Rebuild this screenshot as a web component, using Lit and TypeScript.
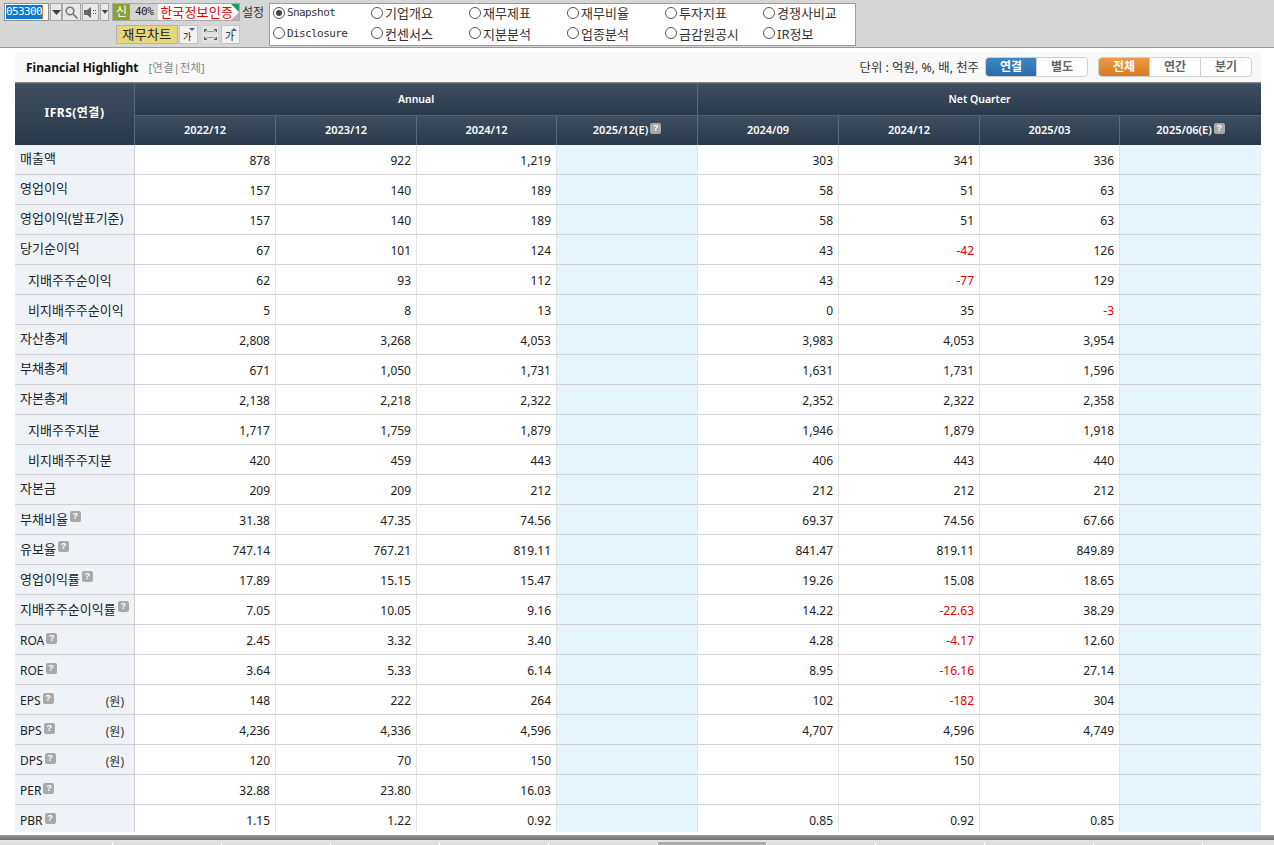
import { LitElement, css, html, nothing } from 'lit'
import { customElement } from 'lit/decorators.js'

type Row = {
  label: string
  indent?: boolean
  help?: boolean
  unit?: string
  values: string[]
}

const RADIOS = [
  'Snapshot', '기업개요', '재무제표', '재무비율', '투자지표', '경쟁사비교',
  'Disclosure', '컨센서스', '지분분석', '업종분석', '금감원공시', 'IR정보',
]

const ANNUAL = ['2022/12', '2023/12', '2024/12', '2025/12(E)']
const QUARTER = ['2024/09', '2024/12', '2025/03', '2025/06(E)']

const ROWS: Row[] = [
  { label: '매출액', values: ['878', '922', '1,219', '', '303', '341', '336', ''] },
  { label: '영업이익', values: ['157', '140', '189', '', '58', '51', '63', ''] },
  { label: '영업이익(발표기준)', values: ['157', '140', '189', '', '58', '51', '63', ''] },
  { label: '당기순이익', values: ['67', '101', '124', '', '43', '-42', '126', ''] },
  { label: '지배주주순이익', indent: true, values: ['62', '93', '112', '', '43', '-77', '129', ''] },
  { label: '비지배주주순이익', indent: true, values: ['5', '8', '13', '', '0', '35', '-3', ''] },
  { label: '자산총계', values: ['2,808', '3,268', '4,053', '', '3,983', '4,053', '3,954', ''] },
  { label: '부채총계', values: ['671', '1,050', '1,731', '', '1,631', '1,731', '1,596', ''] },
  { label: '자본총계', values: ['2,138', '2,218', '2,322', '', '2,352', '2,322', '2,358', ''] },
  { label: '지배주주지분', indent: true, values: ['1,717', '1,759', '1,879', '', '1,946', '1,879', '1,918', ''] },
  { label: '비지배주주지분', indent: true, values: ['420', '459', '443', '', '406', '443', '440', ''] },
  { label: '자본금', values: ['209', '209', '212', '', '212', '212', '212', ''] },
  { label: '부채비율', help: true, values: ['31.38', '47.35', '74.56', '', '69.37', '74.56', '67.66', ''] },
  { label: '유보율', help: true, values: ['747.14', '767.21', '819.11', '', '841.47', '819.11', '849.89', ''] },
  { label: '영업이익률', help: true, values: ['17.89', '15.15', '15.47', '', '19.26', '15.08', '18.65', ''] },
  { label: '지배주주순이익률', help: true, values: ['7.05', '10.05', '9.16', '', '14.22', '-22.63', '38.29', ''] },
  { label: 'ROA', help: true, values: ['2.45', '3.32', '3.40', '', '4.28', '-4.17', '12.60', ''] },
  { label: 'ROE', help: true, values: ['3.64', '5.33', '6.14', '', '8.95', '-16.16', '27.14', ''] },
  { label: 'EPS', help: true, unit: '(원)', values: ['148', '222', '264', '', '102', '-182', '304', ''] },
  { label: 'BPS', help: true, unit: '(원)', values: ['4,236', '4,336', '4,596', '', '4,707', '4,596', '4,749', ''] },
  { label: 'DPS', help: true, unit: '(원)', values: ['120', '70', '150', '', '', '150', '', ''] },
  { label: 'PER', help: true, values: ['32.88', '23.80', '16.03', '', '', '', '', ''] },
  { label: 'PBR', help: true, values: ['1.15', '1.22', '0.92', '', '0.85', '0.92', '0.85', ''] },
]

const COLS = [120, 141, 141, 140, 141, 141, 141, 140, 141]
const TABS = 11

@customElement('app-root')
export class AppRoot extends LitElement {
  static styles = css`
    :host {
      display: block;
      height: 845px;
      overflow: hidden;
      background: #fff;
      font-family: "Noto Sans", "Noto Sans CJK KR", sans-serif;
      font-size: 12px;
      color: #222;
    }
    .page { display: flex; flex-direction: column; height: 845px; }

    .toolbar {
      flex: none;
      display: flex;
      gap: 5px;
      padding: 3px 0 0 4px;
      box-sizing: border-box;
      background: #d6d6d6;
      border-bottom: 1px solid #9a9a9a;
      height: 48px;
    }
    .controls { width: 260px; display: flex; flex-direction: column; gap: 4px; }
    .control-row { display: flex; align-items: center; height: 18px; }
    .control-row.second { height: 19px; padding-left: 112px; }
    .code {
      width: 45px; height: 18px; box-sizing: border-box; overflow: hidden;
      background: #fff; border: 1px solid #8f8f8f;
      padding: 1px 0 0 1px;
      font: 11px/14px "DejaVu Sans Mono", monospace; color: #fff;
    }
    .code span {
      display: inline-block; background: #0a78d7; width: 36px; height: 14px;
      border-right: 1px solid #e07b1c; letter-spacing: -0.6px;
    }
    .tool {
      height: 18px; box-sizing: border-box;
      display: flex; align-items: center; justify-content: center;
      background: #e9e9e9; border: 1px solid #a8a8a8;
    }
    .tool.drop { width: 13px; margin-left: 1px; }
    .tool.search { width: 19px; }
    .tool.sound { width: 17px; margin-left: 1px; }
    .tool.drop2 { width: 9px; margin-left: 1px; }
    .cert {
      width: 129px; height: 18px; margin-left: 3px; box-sizing: border-box;
      display: flex; position: relative;
      background: #fff; border: 1px solid #a8a8a8;
    }
    .cert .sin { width: 17px; background: #8ea12f; color: #fff; text-align: center; line-height: 16px; }
    .cert .pct {
      width: 28px; background: #d3d3d3; text-align: center; color: #222;
      font: 11px/16px "DejaVu Sans Mono", monospace; letter-spacing: -0.5px;
    }
    .cert .name { color: #e60000; font-size: 13px; line-height: 16px; padding-left: 2px; white-space: nowrap; letter-spacing: 0.2px; }
    .cert .corner-top { position: absolute; right: 0; top: 0; border-top: 8px solid #14a05a; border-left: 8px solid transparent; }
    .cert .corner-bottom { position: absolute; right: 0; bottom: 0; border-bottom: 8px solid #b5b5b5; border-left: 8px solid transparent; }
    .setting { margin-left: 2px; font-size: 12px; white-space: nowrap; color: #333; }
    .chart-btn {
      width: 62px; height: 19px; box-sizing: border-box;
      background: #e6d67c; border: 1px solid #b3b3b3;
      text-align: center; font-size: 13px; line-height: 17px; color: #222;
      letter-spacing: 0.4px;
    }
    .mini {
      width: 19px; height: 19px; box-sizing: border-box; position: relative;
      background: #f1f1f1; border: 1px solid #c4c4c4; color: #222;
    }
    .mini span.ko { position: absolute; left: 3px; bottom: 1px; line-height: 11px; }
    .mini.first { margin-left: 1px; font-size: 9px; }
    .mini.fit {
      width: 18px; margin: 0 2px 0 3px; display: flex; align-items: center; justify-content: center;
      background: #e2e2e2; border-color: #d6d6d6;
    }
    .mini.last { font-size: 10px; }
    .mini .arrow { position: absolute; right: 2px; top: 2px; border-left: 3px solid transparent; border-right: 3px solid transparent; }
    .mini .arrow.down { border-top: 3px solid #44619f; }
    .mini .arrow.up { border-bottom: 3px solid #44619f; }

    .radios {
      width: 587px; height: 43px; box-sizing: border-box;
      display: grid; grid-template-columns: repeat(6, 98px); grid-template-rows: 17px 24px;
      padding: 0 0 0 3px;
      background: #fff; border: 1px solid #9c9c9c;
    }
    .radio { display: flex; align-items: center; gap: 2px; font-size: 13px; color: #333; white-space: nowrap; }
    .radio .latin { font: 11px "DejaVu Sans Mono", monospace; letter-spacing: -0.6px; }
    .radio i {
      width: 10px; height: 10px; border: 1px solid #555; border-radius: 50%;
      display: flex; align-items: center; justify-content: center; background: #fff; flex: none;
    }
    .radio i b { width: 6px; height: 6px; border-radius: 50%; background: #444; }

    .main { flex: 1; min-height: 0; overflow: hidden; padding: 4px 13px 0 15px; }
    .title-bar {
      height: 30px; box-sizing: border-box;
      display: flex; align-items: center;
      padding: 0 9px 0 11px;
      background: #f8f8f8;
    }
    .title { font-size: 12px; font-weight: 700; color: #111; }
    .title-sub { margin-left: 10px; color: #888; font-size: 11.5px; }
    .unit-note { margin-left: auto; margin-right: 6px; font-size: 12.4px; color: #333; }
    .seg { display: flex; height: 20px; box-sizing: border-box; border-radius: 4px; overflow: hidden; border: 1px solid #cfcfcf; background: #fff; }
    .seg.gap { margin-left: 10px; }
    .seg span {
      width: 50px; text-align: center; line-height: 18px; font-size: 12px;
      font-weight: 700; color: #666; border-left: 1px solid #cfcfcf;
    }
    .seg span:first-child { border-left: 0; }
    .seg span.blue { background: linear-gradient(#3f87c4, #2a6ba8); color: #fff; }
    .seg span.orange { background: linear-gradient(#ec9a45, #d87a22); color: #fff; }

    .table-clip { height: 749px; overflow: hidden; border-top: 1px solid #888; }
    table { width: 1246px; border-collapse: separate; border-spacing: 0; table-layout: fixed; }
    th {
      color: #fff; font-size: 11px; font-weight: 600;
      background: linear-gradient(#3e4e5e, #2b3a4a);
      border-right: 1px solid #5c6977;
      border-top: 1px solid #56636f;
      padding: 0 0 2px; box-sizing: border-box;
    }
    thead tr:first-child th { height: 32px; }
    thead tr:last-child th { height: 30px; }
    th.group { font-size: 10.5px; }
    th.corner { font-size: 12px; font-weight: 700; letter-spacing: 0.5px; padding-bottom: 6px; }
    th.end { border-right: 0; }
    td {
      height: 30px; box-sizing: border-box; padding: 1px 5px 0 0;
      text-align: right; font-size: 12px; color: #222;
      border-right: 1px solid #e2e2e2;
      border-bottom: 1px solid #d0d0d0;
      background: #fff;
    }
    td.neg { color: #e00000; }
    td.est { background: #e6f5fb; }
    td.est.end { border-right: 0; }
    td.name { background: #eff3f8; text-align: left; padding: 2px 0 0 5px; border-right: 1px solid #d0d0d0; }
    td.name.ko { font-size: 13px; padding: 0 0 5px 5px; }
    td.name.ko.indent { padding: 0 0 1px 13px; }
    td.name.ko.has-help { padding-bottom: 2px; }
    .name-line { display: flex; align-items: center; white-space: nowrap; }
    .name-line .unit { margin-left: auto; margin-right: 10px; color: #333; }
    .help {
      display: inline-flex; align-items: center; justify-content: center; flex: none;
      width: 11px; height: 11px; border-radius: 2px; margin: -5px 0 0 2px; vertical-align: middle;
      background: #a9a9a9; color: #fff; font: 700 9px/11px "Liberation Sans", sans-serif;
    }

    .footer { flex: none; height: 10px; background: #e3e3e3; }
    .footer-line { height: 5px; background: linear-gradient(#9a9a9a, #6f6f6f); }
    .tabs { display: grid; grid-template-columns: 113px repeat(${TABS - 1}, 109px); margin-top: 2px; height: 3px; }
    .tabs span { border-right: 1px solid #fff; background: #dedede; }
    .tabs span.active { background: #aaa; }
  `

  private renderHelp() {
    return html`<span class="help">?</span>`
  }

  private renderCell(value: string, index: number) {
    const est = index === 3 || index === 7
    const classes = ['val', est ? 'est' : '', index === 7 ? 'end' : '', value.startsWith('-') ? 'neg' : '']
    return html`<td class=${classes.join(' ')}>${value}</td>`
  }

  private renderRow(row: Row) {
    const korean = /[가-힣]/.test(row.label)
    const cls = ['name', row.indent ? 'indent' : '', row.help ? 'has-help' : '', korean ? 'ko' : ''].join(' ')
    return html`<tr>
      <td class=${cls}>
        <div class="name-line">
          ${row.label}${row.help ? this.renderHelp() : nothing}
          ${row.unit ? html`<span class="unit">${row.unit}</span>` : nothing}
        </div>
      </td>
      ${row.values.map((v, i) => this.renderCell(v, i))}
    </tr>`
  }

  private renderPeriod(label: string, end = false) {
    const est = label.includes('(E)')
    return html`<th class=${end ? 'end' : ''}>${label}${est ? this.renderHelp() : nothing}</th>`
  }

  private renderRadio(label: string, i: number) {
    const latin = /^[A-Za-z]+$/.test(label)
    return html`
      <label class="radio">
        <i>${i === 0 ? html`<b></b>` : nothing}</i>
        ${latin ? html`<span class="latin">${label}</span>` : label}
      </label>
    `
  }

  render() {
    return html`
      <div class="page">
        <div class="toolbar">
          <div class="controls">
            <div class="control-row">
              <div class="code"><span>053300</span></div>
              <div class="tool drop"><svg width="9" height="5"><path d="M0 0h9L4.5 5z" fill="#444"/></svg></div>
              <div class="tool search">
                <svg width="13" height="13" fill="none" stroke="#777" stroke-width="1.6"><circle cx="5" cy="5" r="3.8"/><path d="M8 8l4.5 4.5"/></svg>
              </div>
              <div class="tool sound">
                <svg width="13" height="11"><path d="M0 3h3l4-3v11L3 8H0z" fill="#666"/><path d="M9 3h1v1H9zM11 3h1v1h-1zM9 6h1v1H9zM11 6h1v1h-1z" fill="#555"/></svg>
              </div>
              <div class="tool drop2"><svg width="6" height="4"><path d="M0 0h6L3 4z" fill="#444"/></svg></div>
              <div class="cert">
                <span class="sin">신</span>
                <span class="pct">40%</span>
                <span class="name">한국정보인증</span>
                <span class="corner-top"></span>
                <span class="corner-bottom"></span>
              </div>
              <span class="setting">설정</span>
            </div>
            <div class="control-row second">
              <div class="chart-btn">재무차트</div>
              <div class="mini first"><span class="ko">가</span><span class="arrow down"></span></div>
              <div class="mini fit">
                <svg width="13" height="11" fill="none" stroke="#666" stroke-width="1.4"><path d="M.7 3V.7H3M10 .7h2.3V3M12.3 8v2.3H10M3 10.3H.7V8"/><path d="M3 2.5h7M3 8.5h7" stroke="#999" stroke-width="1"/></svg>
              </div>
              <div class="mini last"><span class="ko">가</span><span class="arrow up"></span></div>
            </div>
          </div>
          <div class="radios">
            ${RADIOS.map((label, i) => this.renderRadio(label, i))}
          </div>
        </div>

        <div class="main">
          <div class="title-bar">
            <span class="title">Financial Highlight</span>
            <span class="title-sub">[연결|전체]</span>
            <span class="unit-note">단위 : 억원, %, 배, 천주</span>
            <div class="seg"><span class="blue">연결</span><span>별도</span></div>
            <div class="seg gap"><span class="orange">전체</span><span>연간</span><span>분기</span></div>
          </div>
          <div class="table-clip">
            <table>
              <colgroup>${COLS.map((w) => html`<col style="width:${w}px" />`)}</colgroup>
              <thead>
                <tr>
                  <th class="corner" rowspan="2">IFRS(연결)</th>
                  <th class="group" colspan="4">Annual</th>
                  <th class="group end" colspan="4">Net Quarter</th>
                </tr>
                <tr>
                  ${ANNUAL.map((l) => this.renderPeriod(l))}
                  ${QUARTER.map((l, i) => this.renderPeriod(l, i === 3))}
                </tr>
              </thead>
              <tbody>${ROWS.map((r) => this.renderRow(r))}</tbody>
            </table>
          </div>
        </div>

        <div class="footer">
          <div class="footer-line"></div>
          <div class="tabs">
            ${Array.from({ length: TABS }).map((_, i) => html`<span class=${i === 6 ? 'active' : ''}></span>`)}
          </div>
        </div>
      </div>
    `
  }
}
